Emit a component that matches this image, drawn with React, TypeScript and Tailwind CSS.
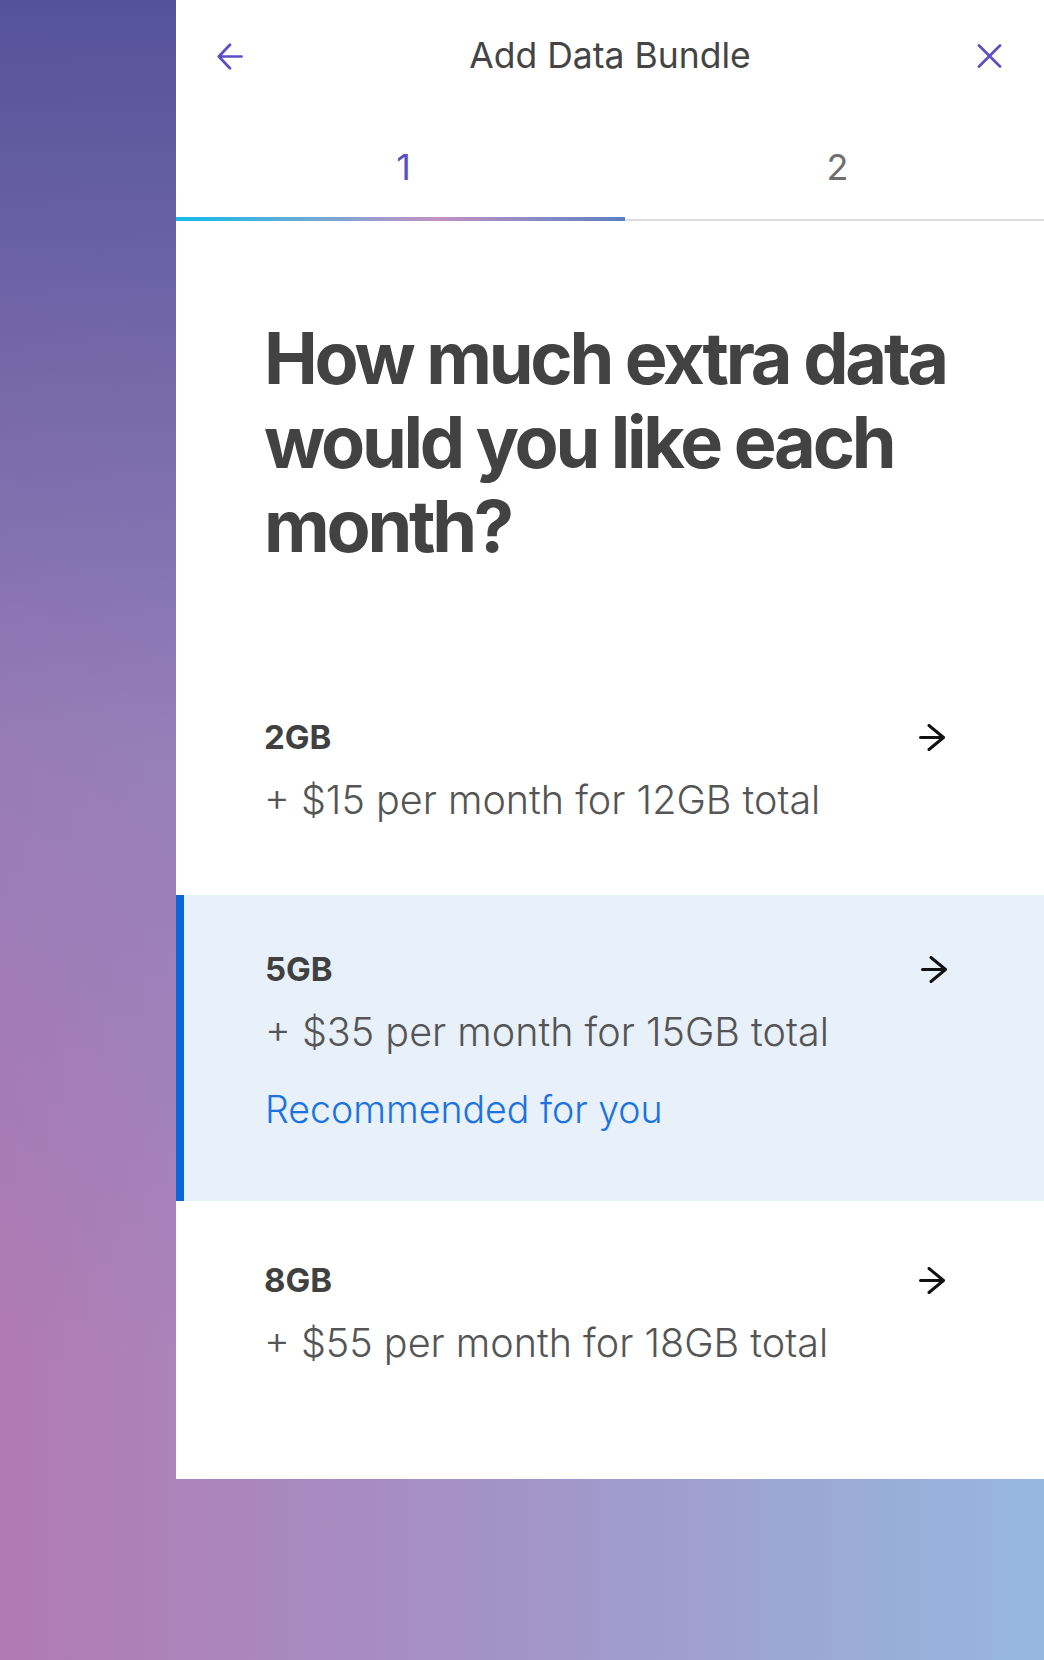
import React from "react";

type Option = {
  size: string;
  price: string;
  recommended?: boolean;
  pad: string;
};

const options: Option[] = [
  { size: "2GB", price: "+ $15 per month for 12GB total", pad: "pt-[61px] pb-[76px]" },
  { size: "5GB", price: "+ $35 per month for 15GB total", recommended: true, pad: "pt-[58px] pb-[72px]" },
  { size: "8GB", price: "+ $55 per month for 18GB total", pad: "pt-[63px] pb-[74px]" },
];

function BackIcon() {
  return (
    <svg width="26" height="27" viewBox="0 0 26 27" fill="none" stroke="#5a4fc5" strokeWidth="2.7" strokeLinecap="round" strokeLinejoin="round">
      <path d="M24.5 13.5H1.8M13 1.8L1.8 13.5L13 25.2" />
    </svg>
  );
}

function CloseIcon() {
  return (
    <svg width="25" height="24" viewBox="0 0 25 24" fill="none" stroke="#5a4fc5" strokeWidth="2.7" strokeLinecap="round">
      <path d="M2 1.5L23 22.5M23 1.5L2 22.5" />
    </svg>
  );
}

function ArrowIcon() {
  return (
    <svg className="mt-[3px] shrink-0" width="26" height="27" viewBox="0 0 26 27" fill="none" stroke="#111111" strokeWidth="3" strokeLinecap="round" strokeLinejoin="round">
      <path d="M1.5 13.5H24.5M10 1.5L24.5 13.5L10 25.5" />
    </svg>
  );
}

function OptionRow({ option }: { option: Option }) {
  return (
    <button
      type="button"
      className={`flex w-full items-start justify-between text-left ${option.pad} ${
        option.recommended
          ? "border-l-8 border-[#0a66d8] bg-[#e8f0fa] pl-[81px] pr-[97px]"
          : "pl-[88px] pr-[99px]"
      }`}
    >
      <div className="flex flex-col">
        <span className="text-[33px] font-bold leading-none text-[#404040]">{option.size}</span>
        <span className="mt-[27px] text-[39.5px] font-light leading-[38px] text-[#555555]">{option.price}</span>
        {option.recommended && (
          <span className="mt-[40px] text-[37.5px] font-light leading-[38px] text-[#1a73e0]">Recommended for you</span>
        )}
      </div>
      <ArrowIcon />
    </button>
  );
}

export default function App() {
  return (
    <div className="min-h-[1660px] w-full bg-[linear-gradient(90deg,#b17ab3_0%,#a394c7_50%,#95b8e1_100%)] font-['Inter',sans-serif]">
      <div className="min-h-[1660px] w-full bg-[linear-gradient(180deg,#54539a_0%,rgba(140,125,185,0.7)_45%,rgba(170,140,190,0)_82%)]">
        <div className="ml-[176px] w-[868px] bg-white pb-[43px]">
          {/* header */}
          <div className="flex h-[112px] items-center justify-between pl-[41px] pr-[42px]">
            <BackIcon />
            <h1 className="text-[35.5px] font-normal leading-none text-[#444444]">Add Data Bundle</h1>
            <CloseIcon />
          </div>

          {/* steps */}
          <div className="flex">
            <div className="flex w-[449px] flex-col">
              <div className="flex h-[105px] items-center justify-center pt-[5px] pl-[6px] text-[36px] leading-none text-[#5a4fc5]">1</div>
              <div className="h-[4px] bg-[linear-gradient(90deg,#10bbe9_0%,#6eaad6_30%,#c391c2_58%,#8a8bc4_80%,#5f80c2_100%)]" />
            </div>
            <div className="flex flex-1 flex-col">
              <div className="flex h-[105px] items-center justify-center pt-[5px] pl-[6px] text-[36px] leading-none text-[#6f6f6f]">2</div>
              <div className="flex h-[4px] items-end">
                <div className="h-[2px] w-full bg-[#dddddd]" />
              </div>
            </div>
          </div>

          <h2 className="mt-[95px] mb-[92px] pl-[88px] pr-[60px] text-[72px] font-bold leading-[84px] tracking-[-0.045em] text-[#424242]">
            How much extra data would you like each month?
          </h2>

          <div className="flex flex-col">
            {options.map((option) => (
              <OptionRow key={option.size} option={option} />
            ))}
          </div>
        </div>
      </div>
    </div>
  );
}
